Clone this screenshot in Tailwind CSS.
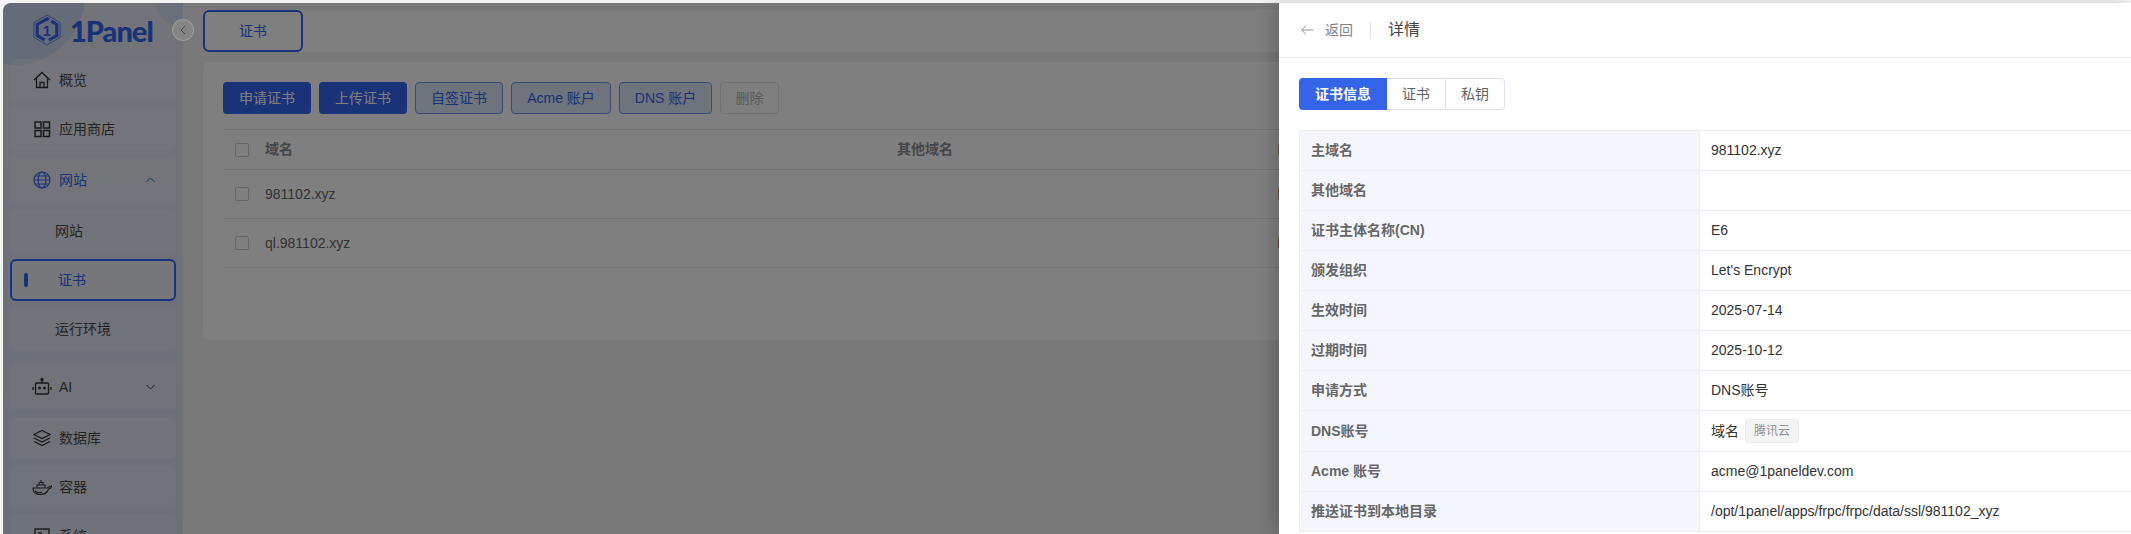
<!DOCTYPE html>
<html lang="zh">
<head>
  <meta charset="UTF-8"/>
  <title>1Panel 证书</title>
  <script src="https://cdn.jsdelivr.net/npm/@tailwindcss/browser@4"></script>
</head>
<body class="bg-[#f4f4f4] overflow-hidden font-['Liberation_Sans','Noto_Sans_CJK_SC',sans-serif] text-[14px]">
<div class="relative w-[2131px] h-[534px] overflow-hidden bg-[#f4f4f4]">
  <div class="absolute left-[3px] top-[3px] right-0 bottom-0 flex overflow-hidden rounded-tl-lg bg-[#f2f2f2]">

    <!-- sidebar -->
    <aside class="relative w-[180px] shrink-0 px-[7px] overflow-hidden bg-gradient-to-b from-[#e4e8f3] to-[#d9dfef] text-[#4a4a4a]">
      <div class="absolute -left-[58px] -top-[78px] w-[140px] h-[140px] rounded-full bg-[#cdd9ef]"></div>
      <div class="absolute left-[153px] -top-[27px] w-[50px] h-[50px] rounded-full bg-[#d5dff3]"></div>

      <div class="relative h-[56px] flex items-center pl-[23px] gap-[9px] text-[#3464f0]">
        <svg class="w-[28px] h-[32px] -mt-[2px]" viewBox="0 0 30 34" fill="none" stroke="#3464f0">
          <path d="M15 1 L29 9 V25 L15 33 L1 25 V9 Z" stroke-width="0.8"/>
          <path d="M17 6.2 L15 5 L4.5 11 V23 L12.5 27.6 M17 27.8 L25.5 23 V11 L19.5 7.6" stroke-width="3.4"/>
          <text x="15" y="23" text-anchor="middle" font-size="16" font-weight="700" fill="#3464f0" stroke="none" font-family="Liberation Sans">1</text>
        </svg>
        <span class="font-['Lato'] font-black text-[29px] leading-none tracking-[-1px] -mt-[2px]">1Panel</span>
      </div>

      <nav class="relative flex flex-col gap-[7px]">
        <div class="h-[42px] rounded-md bg-white/20 flex items-center pl-[23px] gap-[8px]">
          <svg class="w-[18px] h-[18px]" viewBox="0 0 18 18" fill="none" stroke="#333" stroke-width="1.3"><path d="M1 9 L9 1.5 L17 9 M3.5 7.5 V16.5 H14.5 V7.5 M7 16.5 V11.5 H11 V16.5"/></svg>
          <span>概览</span>
        </div>
        <div class="h-[42px] rounded-md bg-white/20 flex items-center pl-[23px] gap-[8px]">
          <svg class="w-[18px] h-[18px]" viewBox="0 0 18 18" fill="none" stroke="#333" stroke-width="1.5"><rect x="2" y="2" width="6" height="6"/><rect x="10.5" y="2" width="6" height="6"/><rect x="2" y="10.5" width="6" height="6"/><rect x="10.5" y="10.5" width="6" height="6"/></svg>
          <span>应用商店</span>
        </div>
        <div class="h-[46px] rounded-md bg-white/20 flex items-center pl-[23px] gap-[8px] text-[#3464f0]">
          <svg class="w-[18px] h-[18px]" viewBox="0 0 18 18" fill="none" stroke="#3464f0" stroke-width="1.2"><circle cx="9" cy="9" r="8"/><ellipse cx="9" cy="9" rx="3.8" ry="8"/><path d="M1 9 H17 M2 5 H16 M2 13 H16"/></svg>
          <span>网站</span>
          <svg class="ml-auto mr-[21px] w-[9px] h-[6px]" viewBox="0 0 9 6" fill="none" stroke="#3464f0"><path d="M0.5 5 L4.5 1 L8.5 5"/></svg>
        </div>
        <div class="h-[42px] rounded-md bg-white/20 flex items-center pl-[45px]">网站</div>
        <div class="h-[42px] rounded-md bg-white/40 border-2 border-[#3464f0] flex items-center pl-[12px] text-[#3464f0]">
          <span class="w-[4px] h-[14px] rounded-[2px] bg-[#3464f0]"></span>
          <span class="ml-[30px]">证书</span>
        </div>
        <div class="h-[42px] rounded-md bg-white/20 flex items-center pl-[45px]">运行环境</div>
        <div class="mt-[7px] h-[46px] rounded-md bg-white/20 flex items-center pl-[22px] gap-[7px]">
          <svg class="w-[20px] h-[20px]" viewBox="0 0 20 20" fill="none" stroke="#333" stroke-width="1.4"><rect x="3.5" y="6" width="13" height="11" rx="1"/><path d="M10 6 V3 M1 10 V13 M19 10 V13"/><circle cx="10" cy="2.5" r="1" fill="#333"/><circle cx="7.5" cy="11" r="0.8" fill="#333"/><circle cx="12.5" cy="11" r="0.8" fill="#333"/></svg>
          <span>AI</span>
          <svg class="ml-auto mr-[21px] w-[9px] h-[6px]" viewBox="0 0 9 6" fill="none" stroke="#333"><path d="M0.5 1 L4.5 5 L8.5 1"/></svg>
        </div>
        <div class="h-[42px] rounded-md bg-white/20 flex items-center pl-[23px] gap-[8px]">
          <svg class="w-[18px] h-[18px]" viewBox="0 0 18 18" fill="none" stroke="#333" stroke-width="1.3"><path d="M9 1.5 L17 5.5 L9 9.5 L1 5.5 Z M1 9 L9 13 L17 9 M1 12.5 L9 16.5 L17 12.5"/></svg>
          <span>数据库</span>
        </div>
        <div class="h-[42px] rounded-md bg-white/20 flex items-center pl-[22px] gap-[7px]">
          <svg class="w-[20px] h-[18px]" viewBox="0 0 20 18" fill="none" stroke="#333" stroke-width="1.1"><path d="M1 10 H15 C16 10 17 9.5 17.5 8.5 C18 9 19 8.7 19.5 8.2 C19 10.5 17.5 11 16.5 11 C15.5 14.5 12 16.5 8 16.5 C3.5 16.5 1 14 1 10 Z"/><path d="M5 9.5 V7 H13 V9.5 M7 7 V4.5 H11 V7 M9 4.5 V2"/><path d="M3 13 C5 15 8 15 10 14"/></svg>
          <span>容器</span>
        </div>
        <div class="h-[42px] rounded-md bg-white/20 flex items-center pl-[23px] gap-[8px]">
          <svg class="w-[18px] h-[18px]" viewBox="0 0 18 18" fill="none" stroke="#333" stroke-width="1.4"><rect x="2" y="2" width="14" height="11"/><path d="M5 16 H13 M5 6 H9"/></svg>
          <span>系统</span>
        </div>
      </nav>
    </aside>

    <!-- main -->
    <main class="flex-1 min-w-0 px-[20px] pt-[7px]">
      <div class="h-[42px] rounded-md bg-white flex">
        <div class="w-[100px] h-[42px] rounded-md border-2 border-[#3464f0] flex items-center justify-center text-[#3464f0]">证书</div>
      </div>
      <section class="mt-[10px] h-[278px] rounded-md bg-white px-[20px] pt-[20px]">
        <div class="flex gap-[8px] h-[32px]">
          <button class="w-[88px] rounded bg-[#3464f0] text-white">申请证书</button>
          <button class="w-[88px] rounded bg-[#3464f0] text-white">上传证书</button>
          <button class="w-[88px] rounded border border-[#7096e8] bg-[#dde6f8] text-[#3464f0]">自签证书</button>
          <button class="w-[100px] rounded border border-[#7096e8] bg-[#dde6f8] text-[#3464f0]">Acme 账户</button>
          <button class="w-[93px] rounded border border-[#7096e8] bg-[#dde6f8] text-[#3464f0]">DNS 账户</button>
          <button class="w-[59px] rounded border border-[#e4e4e4] bg-white text-[#b4b4b4]">删除</button>
        </div>

        <div class="mt-[15px] border-t border-[#e4e7ed] text-[#666]">
          <div class="h-[40px] border-b border-[#e4e7ed] flex items-center font-bold text-[#8a8d93]">
            <span class="ml-[12px] w-[14px] h-[14px] rounded-[2px] border border-[#ccc] bg-white"></span>
            <span class="ml-[16px] w-[632px]">域名</span>
            <span class="w-[381px]">其他域名</span>
            <span class="w-[2px] h-[9px] bg-[#be946a]"></span>
          </div>
          <div class="h-[49px] border-b border-[#e4e7ed] flex items-center">
            <span class="ml-[12px] w-[14px] h-[14px] rounded-[2px] border border-[#ccc] bg-white"></span>
            <span class="ml-[16px] w-[1013px]">981102.xyz</span>
            <span class="w-[2px] h-[10px] bg-[#be946a]"></span>
          </div>
          <div class="h-[49px] border-b border-[#e4e7ed] flex items-center">
            <span class="ml-[12px] w-[14px] h-[14px] rounded-[2px] border border-[#ccc] bg-white"></span>
            <span class="ml-[16px] w-[1013px]">ql.981102.xyz</span>
            <span class="w-[2px] h-[10px] bg-[#be946a]"></span>
          </div>
        </div>
      </section>
    </main>

    <!-- drawer mask -->
    <div class="absolute inset-0 bg-black/50"></div>
  </div>

  <!-- collapse button -->
  <div class="absolute left-[172px] top-[19px] w-[22px] h-[22px] rounded-full border border-[#aaa]/60 bg-[#858585] flex items-center justify-center">
    <svg class="w-[6px] h-[10px]" viewBox="0 0 6 10" fill="none" stroke="#444"><path d="M5 1 L1 5 L5 9"/></svg>
  </div>

  <!-- drawer -->
  <div class="absolute left-[1279px] top-[3px] w-[852px] bottom-0 bg-white shadow-[-6px_0_16px_rgba(0,0,0,0.18)] text-[#333]">
    <header class="h-[55px] border-b border-[#ededed] flex items-center pl-[22px]">
      <svg class="w-[13px] h-[10px]" viewBox="0 0 13 10" fill="none" stroke="#909399"><path d="M5 0.5 L0.8 5 L5 9.5 M0.8 5 H12.5"/></svg>
      <span class="ml-[11px] text-[#7f8289]">返回</span>
      <span class="ml-[17px] w-px h-[16px] bg-[#dcdfe6]"></span>
      <span class="ml-[17px] text-[16px] text-[#444]">详情</span>
    </header>

    <div class="pl-[20px] pt-[20px]">
      <div class="flex h-[32px] w-[206px] text-[#606266]">
        <div class="w-[88px] rounded-l bg-[#3464ea] text-white font-bold flex items-center justify-center">证书信息</div>
        <div class="w-[58px] border-y border-[#dcdfe6] flex items-center justify-center">证书</div>
        <div class="w-[60px] rounded-r border border-[#dcdfe6] flex items-center justify-center">私钥</div>
      </div>

      <div class="mt-[20px] border-t border-l border-[#ebeef5]">
        <div class="flex h-[40px] border-b border-[#ebeef5]">
          <div class="w-[400px] shrink-0 pl-[11px] bg-[#f5f6fb] border-r border-[#ebeef5] flex items-center font-bold text-[#666]">主域名</div>
          <div class="pl-[11px] flex items-center">981102.xyz</div>
        </div>
        <div class="flex h-[40px] border-b border-[#ebeef5]">
          <div class="w-[400px] shrink-0 pl-[11px] bg-[#f5f6fb] border-r border-[#ebeef5] flex items-center font-bold text-[#666]">其他域名</div>
          <div class="pl-[11px] flex items-center"></div>
        </div>
        <div class="flex h-[40px] border-b border-[#ebeef5]">
          <div class="w-[400px] shrink-0 pl-[11px] bg-[#f5f6fb] border-r border-[#ebeef5] flex items-center font-bold text-[#666]">证书主体名称(CN)</div>
          <div class="pl-[11px] flex items-center">E6</div>
        </div>
        <div class="flex h-[40px] border-b border-[#ebeef5]">
          <div class="w-[400px] shrink-0 pl-[11px] bg-[#f5f6fb] border-r border-[#ebeef5] flex items-center font-bold text-[#666]">颁发组织</div>
          <div class="pl-[11px] flex items-center">Let's Encrypt</div>
        </div>
        <div class="flex h-[40px] border-b border-[#ebeef5]">
          <div class="w-[400px] shrink-0 pl-[11px] bg-[#f5f6fb] border-r border-[#ebeef5] flex items-center font-bold text-[#666]">生效时间</div>
          <div class="pl-[11px] flex items-center">2025-07-14</div>
        </div>
        <div class="flex h-[40px] border-b border-[#ebeef5]">
          <div class="w-[400px] shrink-0 pl-[11px] bg-[#f5f6fb] border-r border-[#ebeef5] flex items-center font-bold text-[#666]">过期时间</div>
          <div class="pl-[11px] flex items-center">2025-10-12</div>
        </div>
        <div class="flex h-[40px] border-b border-[#ebeef5]">
          <div class="w-[400px] shrink-0 pl-[11px] bg-[#f5f6fb] border-r border-[#ebeef5] flex items-center font-bold text-[#666]">申请方式</div>
          <div class="pl-[11px] flex items-center">DNS账号</div>
        </div>
        <div class="flex h-[41px] border-b border-[#ebeef5]">
          <div class="w-[400px] shrink-0 pl-[11px] bg-[#f5f6fb] border-r border-[#ebeef5] flex items-center font-bold text-[#666]">DNS账号</div>
          <div class="pl-[11px] flex items-center gap-[6px]">域名 <span class="h-[24px] w-[54px] rounded border border-[#e9e9eb] bg-[#f4f4f5] text-[12px] text-[#909399] flex items-center justify-center">腾讯云</span></div>
        </div>
        <div class="flex h-[40px] border-b border-[#ebeef5]">
          <div class="w-[400px] shrink-0 pl-[11px] bg-[#f5f6fb] border-r border-[#ebeef5] flex items-center font-bold text-[#666]">Acme 账号</div>
          <div class="pl-[11px] flex items-center">acme@1paneldev.com</div>
        </div>
        <div class="flex h-[40px] border-b border-[#ebeef5]">
          <div class="w-[400px] shrink-0 pl-[11px] bg-[#f5f6fb] border-r border-[#ebeef5] flex items-center font-bold text-[#666]">推送证书到本地目录</div>
          <div class="pl-[11px] flex items-center">/opt/1panel/apps/frpc/frpc/data/ssl/981102_xyz</div>
        </div>
      </div>
    </div>
  </div>
</div>
</body>
</html>
